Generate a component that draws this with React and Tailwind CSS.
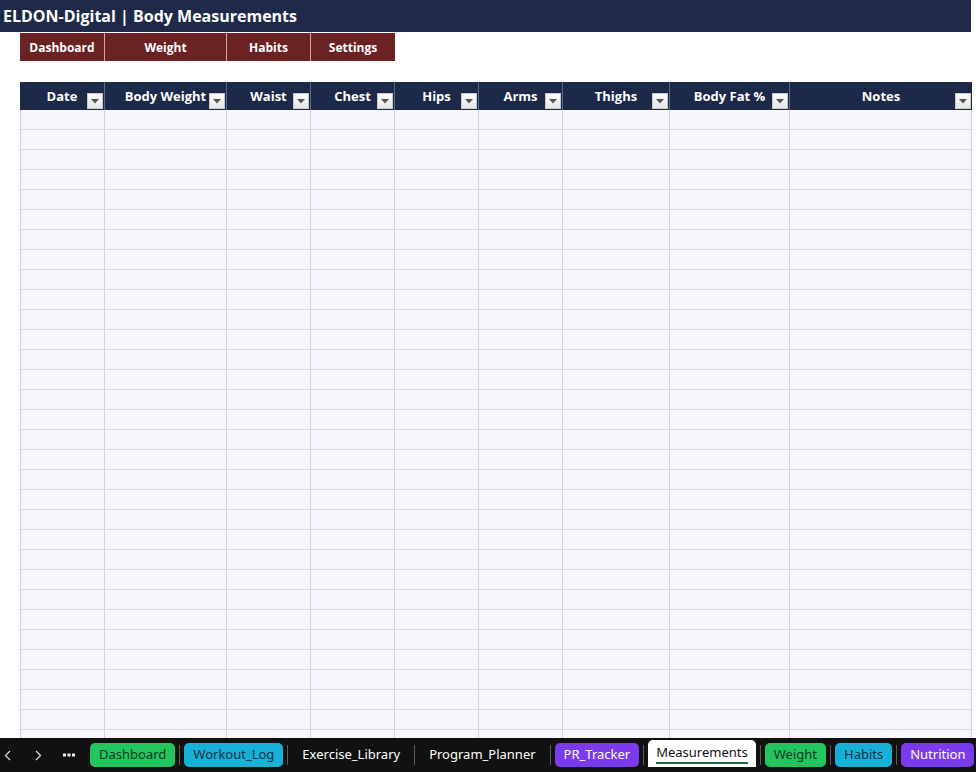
import React from "react";

const cols = [
  { name: "Date", w: 85 },
  { name: "Body Weight", w: 122 },
  { name: "Waist", w: 84 },
  { name: "Chest", w: 84 },
  { name: "Hips", w: 84 },
  { name: "Arms", w: 84 },
  { name: "Thighs", w: 107 },
  { name: "Body Fat %", w: 120 },
  { name: "Notes", w: 182 },
];

const navItems = [
  { name: "Dashboard", w: 85 },
  { name: "Weight", w: 122 },
  { name: "Habits", w: 84 },
  { name: "Settings", w: 84 },
];

const rows = Array.from({ length: 32 }, (_, i) => i);

function DropButton() {
  return (
    <div className="absolute right-[1px] bottom-[1px] w-[16px] h-[16px] bg-gradient-to-b from-[#fafafa] to-[#e6e6e6] border border-[#c8c8c8] flex items-center justify-center">
      <svg width="8" height="5" viewBox="0 0 8 5">
        <path d="M0 0 L8 0 L4 4.5 Z" fill="#555" />
      </svg>
    </div>
  );
}

function SheetTab({ label, cls }) {
  return (
    <div className={`shrink-0 h-[24px] px-[9px] rounded-[5px] flex items-center text-[13px] ${cls}`}>
      {label}
    </div>
  );
}

function Sep() {
  return <div className="shrink-0 w-px h-[20px] bg-[#5a5a5a] mx-[4px]" />;
}

export default function App() {
  return (
    <div
      className="w-[976px] h-[772px] flex flex-col bg-white overflow-hidden"
      style={{ fontFamily: "'Open Sans', 'Liberation Sans', sans-serif" }}
    >
      <div className="h-[32px] w-[971px] bg-[#1e2a47] flex items-center pl-[3px] shrink-0">
        <span className="text-white font-bold text-[16px]">
          ELDON-Digital | Body Measurements
        </span>
      </div>

      <div className="flex pl-[20px] mt-[1px] shrink-0">
        {navItems.map((n) => (
          <div
            key={n.name}
            style={{ width: n.w }}
            className="h-[28px] pt-[1px] bg-[#6b2222] border-r border-[#c9a9a9] last:border-r-0 flex items-center justify-center text-white font-bold text-[12px]"
          >
            {n.name}
          </div>
        ))}
      </div>

      <div className="flex-1 pl-[20px] pt-[21px] overflow-hidden">
        <div className="w-[952px]">
          <div className="flex h-[28px] bg-[#1c2948]">
            {cols.map((c) => (
              <div
                key={c.name}
                style={{ width: c.w }}
                className="relative h-full pt-[1px] border-r border-[#5a6888] last:border-r-0 flex items-center justify-center text-white font-bold text-[13px]"
              >
                {c.name}
                <DropButton />
              </div>
            ))}
          </div>
          {rows.map((r) => (
            <div key={r} className="flex h-[20px] bg-[#f5f7fb] border-b border-[#d6d9df]">
              {cols.map((c) => (
                <div
                  key={c.name}
                  style={{ width: c.w }}
                  className="h-full border-r border-[#d0d3d9] first:border-l"
                />
              ))}
            </div>
          ))}
        </div>
      </div>

      <div
        className="h-[34px] bg-[#111111] flex items-center shrink-0 overflow-hidden text-white"
        style={{ fontFamily: "'Noto Sans', 'Open Sans', sans-serif" }}
      >
        <div className="shrink-0 w-[14px] flex justify-center">
          <svg width="7" height="11" viewBox="0 0 7 11">
            <path d="M6 1 L1.5 5.5 L6 10" stroke="#ddd" strokeWidth="1.2" fill="none" />
          </svg>
        </div>
        <div className="shrink-0 w-[17px]" />
        <div className="shrink-0 w-[14px] flex justify-center">
          <svg width="7" height="11" viewBox="0 0 7 11">
            <path d="M1 1 L5.5 5.5 L1 10" stroke="#ddd" strokeWidth="1.2" fill="none" />
          </svg>
        </div>
        <div className="shrink-0 w-[18px]" />
        <div className="shrink-0 w-[12px] flex justify-center">
          <svg width="12" height="4" viewBox="0 0 12 4">
            <rect x="0" y="0.5" width="3" height="3" fill="#eee" />
            <rect x="4.5" y="0.5" width="3" height="3" fill="#eee" />
            <rect x="9" y="0.5" width="3" height="3" fill="#eee" />
          </svg>
        </div>
        <div className="shrink-0 w-[15px]" />
        <SheetTab label="Dashboard" cls="bg-[#22c55e] text-[#0f3b1f]" />
        <Sep />
        <SheetTab label="Workout_Log" cls="bg-[#17b0d6] text-[#0b3347]" />
        <Sep />
        <SheetTab label="Exercise_Library" cls="text-white px-[10px]" />
        <Sep />
        <SheetTab label="Program_Planner" cls="text-white px-[10px]" />
        <Sep />
        <SheetTab label="PR_Tracker" cls="bg-[#7c3aed] text-white" />
        <Sep />
        <div className="shrink-0 h-[27px] mt-[2px] self-start px-[8px] bg-white rounded-t-[5px] flex flex-col justify-center text-[13px] text-[#111]">
          <span className="leading-[18px]">Measurements</span>
          <div className="h-[2px] bg-[#1d6b40] mt-[1px]" />
        </div>
        <Sep />
        <SheetTab label="Weight" cls="bg-[#22c55e] text-[#0f3b1f]" />
        <Sep />
        <SheetTab label="Habits" cls="bg-[#17b0d6] text-[#0b3347]" />
        <Sep />
        <SheetTab label="Nutrition" cls="bg-[#7c3aed] text-white" />
      </div>
    </div>
  );
}
